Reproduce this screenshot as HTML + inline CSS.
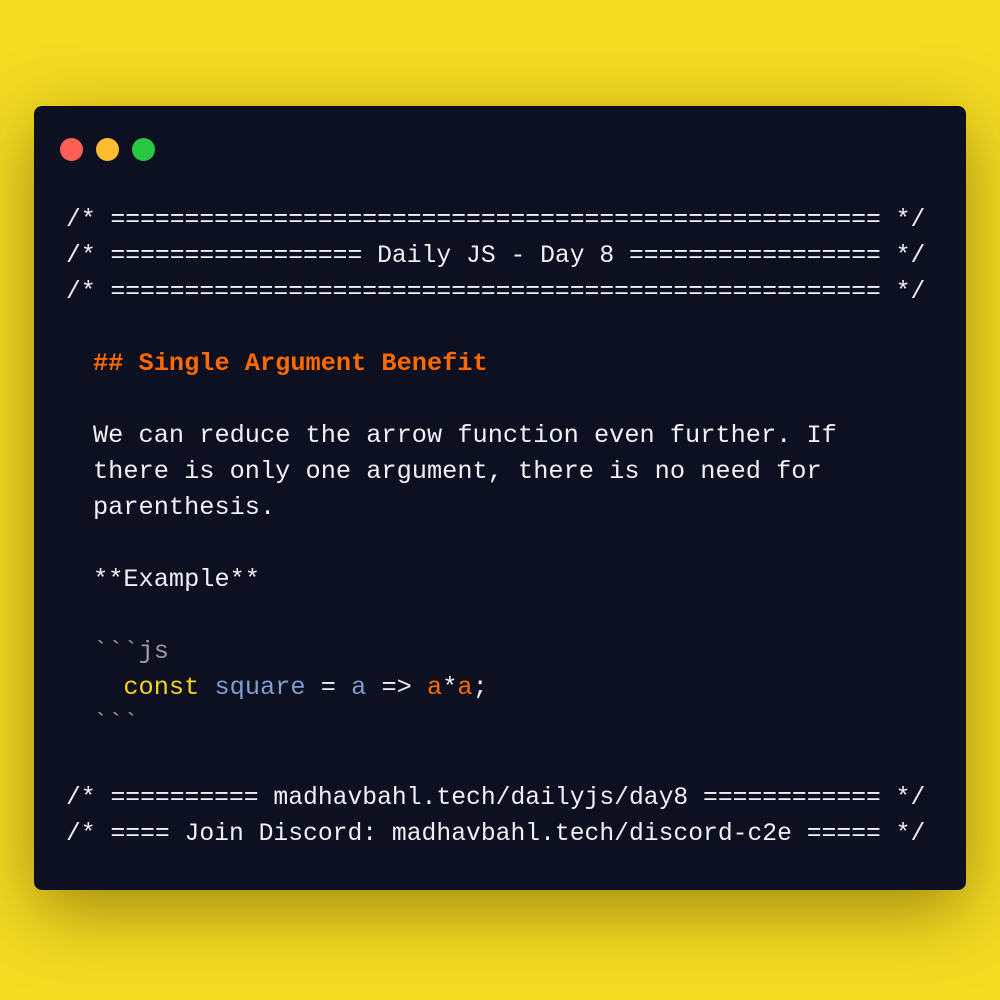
<!DOCTYPE html>
<html><head><style>
html,body{margin:0;padding:0}
body{width:1000px;height:1000px;background:#f4db22;position:relative;overflow:hidden;font-family:"Liberation Mono","DejaVu Sans Mono",monospace}
.card{position:absolute;left:34px;top:106px;width:932px;height:784px;background:#0d1020;border-radius:8px;box-shadow:0 20px 70px rgba(90,70,0,0.55)}
.dot{position:absolute;top:138px;width:23px;height:23px;border-radius:50%}
.l{position:absolute;font-size:24.7px;line-height:36px;white-space:pre;color:#eef0f4;left:66px}
.in{left:93px;font-size:25.3px}
.o{color:#ff6a00}
.g{color:#9a9ca4}
.y{color:#f6d31c}
.b{color:#7f9ecf}
</style></head><body>
<div class="card"></div>
<div class="dot" style="left:60px;background:#ff5f57"></div>
<div class="dot" style="left:96px;background:#febc2e"></div>
<div class="dot" style="left:132px;background:#28c840"></div>
<div class="l" style="top:202px">/* ==================================================== */</div>
<div class="l" style="top:238px">/* ================= Daily JS - Day 8 ================= */</div>
<div class="l" style="top:274px">/* ==================================================== */</div>
<div class="l in o" style="top:346px;font-weight:bold">## Single Argument Benefit</div>
<div class="l in" style="top:418px">We can reduce the arrow function even further. If</div>
<div class="l in" style="top:454px">there is only one argument, there is no need for</div>
<div class="l in" style="top:490px">parenthesis.</div>
<div class="l in" style="top:562px">**Example**</div>
<div class="l in g" style="top:634px">&#96;&#96;&#96;js</div>
<div class="l in" style="top:670px">  <span class="y">const</span> <span class="b">square</span> = <span class="b">a</span> =&gt; <span class="o">a</span>*<span class="o">a</span>;</div>
<div class="l in g" style="top:706px">&#96;&#96;&#96;</div>
<div class="l" style="top:780px">/* ========== madhavbahl.tech/dailyjs/day8 ============ */</div>
<div class="l" style="top:816px">/* ==== Join Discord: madhavbahl.tech/discord-c2e ===== */</div>
</body></html>
